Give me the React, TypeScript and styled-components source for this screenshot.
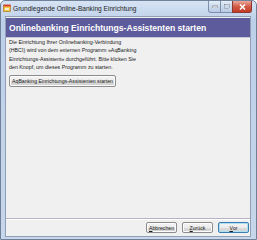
import React from "react";
import styled, { createGlobalStyle } from "styled-components";

const GlobalStyle = createGlobalStyle`
  html, body {
    margin: 0;
    padding: 0;
    background: #ffffff;
  }
  body {
    font-family: "Liberation Sans", Arial, sans-serif;
  }
`;

const Window = styled.div`
  width: 257px;
  height: 240px;
  box-sizing: border-box;
  display: flex;
  flex-direction: column;
  border: 1px solid #6f8299;
  border-radius: 5px 5px 0 0;
  background: linear-gradient(to bottom, #d6e3f3 0px, #bdd0e9 20px, #c7d6ea 100%);
  overflow: hidden;
`;

const TitleBar = styled.div`
  height: 14px;
  display: flex;
  align-items: center;
  padding-left: 2px;
  gap: 2px;
  position: relative;
`;

const TitleText = styled.span`
  font-size: 6.6px;
  color: #1e1e1e;
  white-space: nowrap;
`;

const Controls = styled.div`
  position: absolute;
  top: 0;
  right: 4px;
  display: flex;
`;

const CtrlButton = styled.div<{ $close?: boolean; $w: number }>`
  width: ${(p) => p.$w}px;
  height: 12px;
  box-sizing: border-box;
  border: 1px solid ${(p) => (p.$close ? "#8a3a2e" : "#7d8fa8")};
  border-top: none;
  margin-left: -1px;
  display: flex;
  align-items: center;
  justify-content: center;
  background: ${(p) =>
    p.$close
      ? "linear-gradient(to bottom, #e9a99c 0%, #d25b48 50%, #c23a26 100%)"
      : "linear-gradient(to bottom, #e6eef8 0%, #cad9ec 50%, #b9cce5 100%)"};
  border-radius: ${(p) => (p.$close ? "0 0 3px 0" : "0")};
  &:first-child {
    border-radius: 0 0 0 3px;
  }
`;

const Client = styled.div`
  flex: 1;
  margin: 1px 5px 2px 4px;
  border: 1px solid #8f9fb6;
  background: #f0f0f0;
  display: flex;
  flex-direction: column;
`;

const Header = styled.div`
  margin-top: 1px;
  height: 19px;
  background: #5d5b9c;
  display: flex;
  align-items: center;
  padding-left: 3px;
  border-bottom: 1px solid #c9c9d6;
`;

const HeaderTitle = styled.span`
  font-size: 8.6px;
  font-weight: bold;
  color: #ffffff;
  white-space: nowrap;
`;

const Page = styled.div`
  flex: 1;
  padding: 0 3px;
  border-bottom: 1px solid #b4b4c4;
  box-shadow: 0 1px 0 #ffffff;
`;

const Intro = styled.div`
  font-size: 5.3px;
  line-height: 8.4px;
  color: #1a1a1a;
  white-space: nowrap;
`;

const PushButton = styled.button<{ $default?: boolean }>`
  font-family: "Liberation Sans", Arial, sans-serif;
  font-size: 5.2px;
  color: #1a1a1a;
  box-sizing: border-box;
  padding: 0 3px;
  border: 1px solid ${(p) => (p.$default ? "#3d7bad" : "#8c8c8c")};
  border-radius: 2px;
  background: linear-gradient(to bottom, #f4f4f4 0%, #ebebeb 50%, #dddddd 51%, #cfcfcf 100%);
  box-shadow: inset 0 0 0 1px ${(p) => (p.$default ? "#aee0f5" : "#fcfcfc")};
  display: flex;
  align-items: center;
  justify-content: center;
  white-space: nowrap;
`;

const StartButton = styled(PushButton)`
  margin-top: 3px;
  height: 12px;
  width: 107px;
`;

const ButtonRow = styled.div`
  height: 17px;
  display: flex;
  align-items: center;
  justify-content: flex-end;
  gap: 5px;
  padding-right: 1px;
`;

const NavButton = styled(PushButton)`
  width: 31px;
  height: 11px;
`;

const U = styled.span`
  text-decoration: underline;
`;

const AppIcon = () => (
  <svg width="8" height="8" viewBox="0 0 8 8">
    <rect x="0.5" y="1.5" width="7" height="6" fill="#f3c64a" stroke="#9a6b10" strokeWidth="0.6" />
    <rect x="0.5" y="0.5" width="7" height="2" fill="#d8442c" />
    <rect x="2" y="4" width="4" height="2" fill="#ffffff" opacity="0.7" />
  </svg>
);

export default function App() {
  return (
    <>
      <GlobalStyle />
      <Window>
        <TitleBar>
          <AppIcon />
          <TitleText>Grundlegende Online-Banking Einrichtung</TitleText>
          <Controls>
            <CtrlButton $w={13}>
              <svg width="6" height="3" viewBox="0 0 6 3">
                <rect x="0" y="1" width="6" height="2" fill="#ffffff" stroke="#3a4a60" strokeWidth="0.5" />
              </svg>
            </CtrlButton>
            <CtrlButton $w={13}>
              <svg width="6" height="5" viewBox="0 0 6 5">
                <rect x="0.3" y="0.3" width="5.4" height="4.4" fill="none" stroke="#ffffff" strokeWidth="1.2" />
                <rect x="0.3" y="0.3" width="5.4" height="4.4" fill="none" stroke="#3a4a60" strokeWidth="0.4" />
              </svg>
            </CtrlButton>
            <CtrlButton $w={20} $close>
              <svg width="7" height="6" viewBox="0 0 7 6">
                <path d="M1 0.5 L6 5.5 M6 0.5 L1 5.5" stroke="#ffffff" strokeWidth="1.5" />
              </svg>
            </CtrlButton>
          </Controls>
        </TitleBar>
        <Client>
          <Header>
            <HeaderTitle>Onlinebanking Einrichtungs-Assistenten starten</HeaderTitle>
          </Header>
          <Page>
            <Intro>
              Die Einrichtung Ihrer Onlinebanking-Verbindung
              <br />
              (HBCI) wird von dem externen Programm »AqBanking
              <br />
              Einrichtungs-Assistent« durchgeführt. Bitte klicken Sie
              <br />
              den Knopf, um dieses Programm zu starten.
            </Intro>
            <StartButton>AqBanking Einrichtungs-Assistenten starten</StartButton>
          </Page>
          <ButtonRow>
            <NavButton>
              <U>A</U>bbrechen
            </NavButton>
            <NavButton>
              <U>Z</U>urück
            </NavButton>
            <NavButton $default>
              <U>V</U>or
            </NavButton>
          </ButtonRow>
        </Client>
      </Window>
    </>
  );
}
